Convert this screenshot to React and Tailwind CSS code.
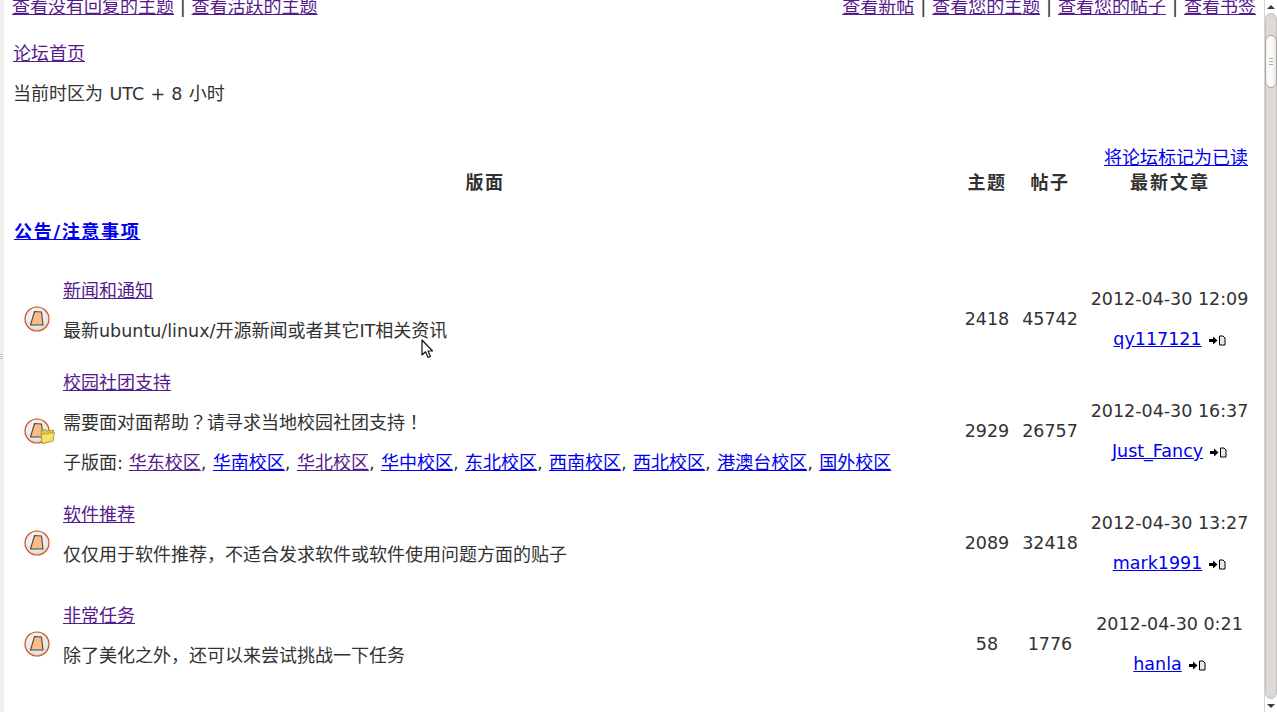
import React from 'react';

const font = '[font-family:"DejaVu_Sans","Noto_Sans_CJK_SC",sans-serif]';

const visited = 'text-[#551a8b] underline';
const unvisited = 'text-[#0000ee] underline';

// latin runs sit a bit narrower than the 18px cjk text
const L = ({ children }) => <span className="text-[17.5px]">{children}</span>;
// centred full-width punctuation
const P = ({ children }) => <span className='leading-none [font-family:"Noto_Sans_CJK_TC",sans-serif]'>{children}</span>;

const subforums = [
  { name: '华东校区', seen: true },
  { name: '华南校区', seen: false },
  { name: '华北校区', seen: true },
  { name: '华中校区', seen: false },
  { name: '东北校区', seen: false },
  { name: '西南校区', seen: false },
  { name: '西北校区', seen: false },
  { name: '港澳台校区', seen: false },
  { name: '国外校区', seen: false },
];

const forums = [
  {
    title: '新闻和通知',
    desc: <>最新<L>ubuntu/linux/</L>开源新闻或者其它<L>IT</L>相关资讯</>,
    topics: 2418,
    posts: 45742,
    date: '2012-04-30 12:09',
    user: 'qy117121',
  },
  {
    title: '校园社团支持',
    desc: <>需要面对面帮助<P>？</P>请寻求当地校园社团支持<P>！</P></>,
    topics: 2929,
    posts: 26757,
    date: '2012-04-30 16:37',
    user: 'Just_Fancy',
    folder: true,
    subs: true,
  },
  {
    title: '软件推荐',
    desc: '仅仅用于软件推荐，不适合发求软件或软件使用问题方面的贴子',
    topics: 2089,
    posts: 32418,
    date: '2012-04-30 13:27',
    user: 'mark1991',
    tall: true,
  },
  {
    title: '非常任务',
    desc: '除了美化之外，还可以来尝试挑战一下任务',
    topics: 58,
    posts: 1776,
    date: '2012-04-30 0:21',
    user: 'hanla',
  },
];

const ForumIcon = ({ folder }) => (
  <svg width="34" height="30" viewBox="0 0 34 30" className="block">
    <defs>
      <radialGradient id="disc" cx="0.45" cy="0.35" r="0.75">
        <stop offset="0" stopColor="#fbfbfa" />
        <stop offset="0.7" stopColor="#e6e4e2" />
        <stop offset="1" stopColor="#bfbdba" />
      </radialGradient>
    </defs>
    <circle cx="13" cy="15" r="12" fill="url(#disc)" stroke="#d2501e" strokeWidth="1.2" />
    <path d="M10.5 7.5 L17.5 8 L19 21 L6.5 21 Z" fill="#fbbd86" stroke="#4a4644" strokeWidth="1.1" strokeLinejoin="round" />
    {folder && (
      <g>
        <path d="M17 15 L21 13.5 L23.5 15 L29.5 14 L29 25 L18 27.5 Z" fill="#dcc34a" stroke="#a68f2c" strokeWidth="0.8" />
        <path d="M17.5 18.5 L30.5 16.5 L29 25 L18 27.5 Z" fill="#f4e26a" stroke="#a68f2c" strokeWidth="0.7" />
      </g>
    )}
  </svg>
);

const LastPostIcon = () => (
  <svg width="17" height="11" viewBox="0 0 17 11" className="inline-block ml-[7px] align-[-1px]">
    <path d="M0 4 H4 V1.5 L8.5 5.5 L4 9.5 V7 H0 Z" fill="#000" />
    <path d="M10.5 1 H14 L16 3 V10 H10.5 Z" fill="#e8e8e6" stroke="#000" strokeWidth="1" />
  </svg>
);

const Scrollbar = () => (
  <div className="w-[13px] h-full shrink-0 flex flex-col bg-white border-l border-[#d8d5d2]">
    <div className="h-[13px] flex items-center justify-center">
      <div className="w-0 h-0 border-x-[4px] border-x-transparent border-b-[4px] border-b-[#3a3a3a]" />
    </div>
    <div className="flex-1 flex flex-col rounded-[6px] bg-[#dcd9d6] border border-[#c4c1be]">
      <div className="h-[21px]" />
      <div className="h-[53px] -mx-[1px] rounded-[6px] border border-[#a9a6a3] bg-gradient-to-r from-[#f4f3f2] via-white to-[#e8e6e4] flex flex-col items-center justify-center gap-[2px]">
        <div className="w-[4px] h-px bg-[#a9a6a3]" />
        <div className="w-[4px] h-px bg-[#a9a6a3]" />
        <div className="w-[4px] h-px bg-[#a9a6a3]" />
      </div>
    </div>
    <div className="h-[13px] flex items-center justify-center">
      <div className="w-0 h-0 border-x-[4px] border-x-transparent border-t-[4px] border-t-[#3a3a3a]" />
    </div>
  </div>
);

const App = () => {
  return (
    <div className={`${font} relative w-[1277px] h-[712px] overflow-hidden flex bg-white text-[18px] leading-[26px] text-[#323232]`}>
      <div className="w-[4px] h-full shrink-0 bg-[#f0efed] flex flex-col items-start justify-center gap-[1px]">
        <div className="w-[3px] h-px bg-[#c9c6c3]" />
        <div className="w-[3px] h-px bg-[#c9c6c3]" />
        <div className="w-[3px] h-px bg-[#c9c6c3]" />
      </div>

      <div className="flex-1 min-w-0 -mt-[6px] pl-2 pr-2">
        <div className="flex justify-between">
          <div>
            <a href="#" className={visited}>查看没有回复的主题</a> | <a href="#" className={visited}>查看活跃的主题</a>
          </div>
          <div className="[word-spacing:0.2px]">
            <a href="#" className={visited}>查看新帖</a> | <a href="#" className={visited}>查看您的主题</a> | <a href="#" className={visited}>查看您的帖子</a> | <a href="#" className={visited}>查看书签</a>
          </div>
        </div>

        <p className="mt-[21px] pl-[1px]"><a href="#" className={visited}>论坛首页</a></p>
        <p className="mt-[14px] pl-[1px] [word-spacing:0.7px]">当前时区为 <L>UTC + 8</L> 小时</p>

        <table className="mt-[29px] w-[1244px] table-fixed border-collapse">
          <colgroup>
            <col className="w-[48px]" />
            <col className="w-[897px]" />
            <col className="w-[60px]" />
            <col className="w-[66px]" />
            <col className="w-[173px]" />
          </colgroup>
          <thead>
            <tr className="h-[61px]">
              <th colSpan="2" className="align-bottom pb-[1px] pl-[1px] font-bold tracking-[1.5px] text-[#323232]">版面</th>
              <th className="align-bottom pb-[1px] font-bold tracking-[1.5px]">主题</th>
              <th className="align-bottom pb-[1px] font-bold tracking-[1.5px]">帖子</th>
              <th className="align-bottom pb-[1px]">
                <div className="font-normal leading-[25px] pl-[13px]"><a href="#" className={unvisited}>将论坛标记为已读</a></div>
                <div className="font-bold tracking-[2px] ml-[1px]">最新文章</div>
              </th>
            </tr>
          </thead>
          <tbody>
            <tr className="h-[77px]">
              <td colSpan="5" className="align-top pt-[22px] pl-[2px]">
                <a href="#" className={`${unvisited} font-bold tracking-[1.7px]`}>公告/注意事项</a>
              </td>
            </tr>
            {forums.map((forum) => (
              <tr key={forum.title} className={forum.subs ? 'h-[132px]' : forum.tall ? 'h-[101px]' : 'h-[92px]'}>
                <td className="pl-[12px]">
                  <div className={forum.tall ? 'pb-[12px]' : 'pb-[3px]'}>
                    <ForumIcon folder={forum.folder} />
                  </div>
                </td>
                <td className="align-top pl-[3px]">
                  <div className="pt-[4px]"><a href="#" className={visited}>{forum.title}</a></div>
                  <div className="mt-[14px]">{forum.desc}</div>
                  {forum.subs && (
                    <div className="mt-[14px]">
                      子版面:{' '}
                      {subforums.map((sub, i) => (
                        <span key={sub.name}>
                          <a href="#" className={sub.seen ? visited : unvisited}>{sub.name}</a>
                          {i < subforums.length - 1 ? <span className="mr-[0.6px]">, </span> : ''}
                        </span>
                      ))}
                    </div>
                  )}
                </td>
                <td className="text-center">
                  <div className={forum.tall ? 'pb-[11px]' : 'pb-[2px]'}><L>{forum.topics}</L></div>
                </td>
                <td className="text-center">
                  <div className={forum.tall ? 'pb-[11px]' : 'pb-[2px]'}><L>{forum.posts}</L></div>
                </td>
                <td className="text-center whitespace-nowrap">
                  <div className={forum.tall ? 'pb-[11px]' : 'pb-[2px]'}>
                    <div><L>{forum.date}</L></div>
                    <div className="mt-[14px]">
                      <a href="#" className={unvisited}><L>{forum.user}</L></a>
                      <LastPostIcon />
                    </div>
                  </div>
                </td>
              </tr>
            ))}
          </tbody>
        </table>
      </div>

      <Scrollbar />

      <svg width="14" height="21" viewBox="0 0 14 21" className="absolute left-[421px] top-[339px]">
        <path d="M1 1 V16 L4.5 12.8 L7 18.5 L9.5 17.4 L7 12 H11.5 Z" fill="#fff" stroke="#111" strokeWidth="1.2" strokeLinejoin="round" />
      </svg>
    </div>
  );
};

export default App;
